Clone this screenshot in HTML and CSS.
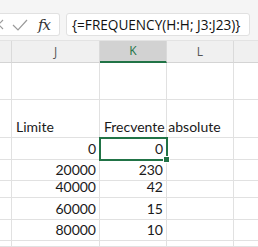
FILE: index.html
```html
<!DOCTYPE html>
<html lang="ro">
<head>
    <meta charset="UTF-8">
    <title>Frecvente</title>
    <link rel="stylesheet" href="styles.css">
</head>
<body>
    <div class="formula-bar">
        <div class="fx-box">
            <svg class="icon cancel" width="8" height="14" viewBox="0 0 8 14">
                <path d="M-4 2 L5 11 M5 2 L-4 11" stroke="#9a9a9a" stroke-width="1.2" fill="none"/>
            </svg>
            <svg class="icon check" width="18" height="14" viewBox="0 0 18 14">
                <path d="M2 7 L7 12 L16 2" stroke="#9a9a9a" stroke-width="1.2" fill="none"/>
            </svg>
            <span class="fx">fx</span>
        </div>
        <div class="formula">{=FREQUENCY(H:H; J3:J23)}</div>
    </div>

    <div class="sheet">
        <div class="row head">
            <div class="cell c-i"></div>
            <div class="cell c-j">J</div>
            <div class="cell c-k active">K</div>
            <div class="cell c-l">L</div>
            <div class="cell c-m"></div>
        </div>
        <div class="row r-tall">
            <div class="cell c-i"></div>
            <div class="cell c-j"></div>
            <div class="cell c-k"></div>
            <div class="cell c-l"></div>
            <div class="cell c-m"></div>
        </div>
        <div class="row r-title">
            <div class="cell c-i"></div>
            <div class="cell c-j left">Limite</div>
            <div class="cell c-k left overflow">Frecvente absolute</div>
            <div class="cell c-l"></div>
            <div class="cell c-m"></div>
        </div>
        <div class="row r-22">
            <div class="cell c-i"></div>
            <div class="cell c-j">0</div>
            <div class="cell c-k selected">0<span class="handle"></span></div>
            <div class="cell c-l"></div>
            <div class="cell c-m"></div>
        </div>
        <div class="row r-21">
            <div class="cell c-i"></div>
            <div class="cell c-j">20000</div>
            <div class="cell c-k">230</div>
            <div class="cell c-l"></div>
            <div class="cell c-m"></div>
        </div>
        <div class="row r-17">
            <div class="cell c-i"></div>
            <div class="cell c-j">40000</div>
            <div class="cell c-k">42</div>
            <div class="cell c-l"></div>
            <div class="cell c-m"></div>
        </div>
        <div class="row r-22">
            <div class="cell c-i"></div>
            <div class="cell c-j">60000</div>
            <div class="cell c-k">15</div>
            <div class="cell c-l"></div>
            <div class="cell c-m"></div>
        </div>
        <div class="row r-21">
            <div class="cell c-i"></div>
            <div class="cell c-j">80000</div>
            <div class="cell c-k">10</div>
            <div class="cell c-l"></div>
            <div class="cell c-m"></div>
        </div>
        <div class="row r-last">
            <div class="cell c-i"></div>
            <div class="cell c-j"></div>
            <div class="cell c-k"></div>
            <div class="cell c-l"></div>
            <div class="cell c-m"></div>
        </div>
    </div>
</body>
</html>
```

FILE: styles.css
```css
body {
    margin: 0;
    width: 258px;
    height: 247px;
    overflow: hidden;
    background: #fff;
    font-family: Lato, "Open Sans", sans-serif;
}
.formula-bar {
    display: flex;
    gap: 6px;
    height: 41px;
    padding-top: 13px;
    box-sizing: border-box;
    background: #f5f5f5;
    border-bottom: 1px solid #e3e3e3;
}
.fx-box {
    display: flex;
    align-items: center;
    width: 62px;
    height: 23px;
    margin-left: -2px;
    background: #fff;
    border: 1px solid #e1e1e1;
    border-left: none;
    border-radius: 0 3px 3px 0;
    box-sizing: border-box;
}
.icon {
    display: block;
}
.check {
    margin-left: 5px;
}
.fx {
    margin-left: 9px;
    font-family: "DejaVu Serif", "Liberation Serif", serif;
    font-style: italic;
    font-size: 15px;
    color: #333;
    letter-spacing: -1px;
}
.formula {
    flex: none;
    width: 184px;
    height: 23px;
    line-height: 22px;
    padding-left: 5px;
    background: #fff;
    border: 1px solid #e1e1e1;
    border-radius: 3px;
    box-sizing: border-box;
    font-family: "Open Sans", sans-serif;
    font-size: 13.6px;
    color: #111;
}
.row {
    display: flex;
}
.cell {
    flex: none;
    position: relative;
    display: flex;
    align-items: flex-end;
    justify-content: flex-end;
    box-sizing: border-box;
    padding: 0 3px 2px 0;
    border-right: 1px solid #e1e1e1;
    border-bottom: 1px solid #e1e1e1;
    font-size: 14px;
    line-height: 16px;
    color: #1a1a1a;
}
.c-i { width: 12px; }
.c-j { width: 88px; }
.c-k { width: 67px; }
.c-l { width: 67px; }
.c-m { width: 30px; border-right: none; }
.left {
    justify-content: flex-start;
    padding-left: 4px;
}
.overflow {
    overflow: visible;
    white-space: nowrap;
    z-index: 1;
}
.head {
    height: 22px;
    background: #f0f0f0;
}
.head .cell {
    justify-content: center;
    align-items: center;
    padding: 0;
    border-right-color: #dadada;
    border-bottom-color: #d4d4d4;
    font-family: "Open Sans", sans-serif;
    font-size: 12px;
    color: #555;
}
.head .active {
    background: #d2d2d2;
    color: #217346;
    border-bottom: 2px solid #217346;
}
.r-tall { height: 37px; }
.r-title { height: 38px; }
.r-22 { height: 22px; }
.r-21 { height: 21px; }
.r-17 { height: 17px; }
.r-last { height: 6px; }
.selected {
    outline: 2px solid #217346;
    outline-offset: -1px;
    z-index: 2;
}
.handle {
    position: absolute;
    right: -4px;
    bottom: -4px;
    width: 5px;
    height: 5px;
    background: #217346;
    border: 1px solid #fff;
}
```
